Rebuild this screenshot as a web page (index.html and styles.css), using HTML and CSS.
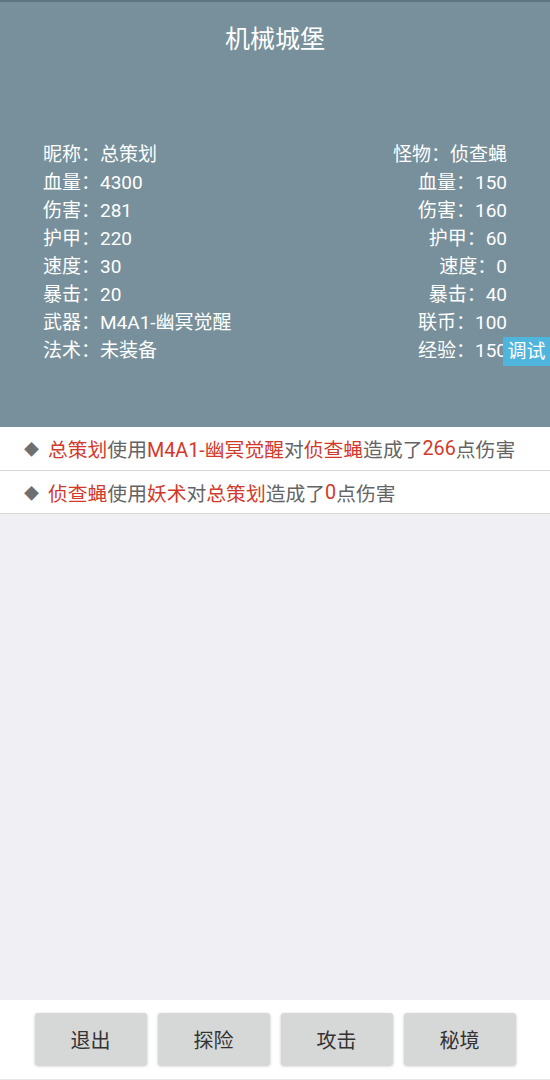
FILE: index.html
```html
<!DOCTYPE html>
<html lang="zh-CN">
<head>
    <meta charset="UTF-8">
    <meta name="viewport" content="width=device-width, initial-scale=1.0">
    <title>机械城堡</title>
    <link rel="stylesheet" href="styles.css">
</head>
<body>
    <div id="app">
        <div id="header">
            <div class="title">机械城堡</div>
            <div class="stats">
                <div class="stat-col">
                    <div>昵称：总策划</div>
                    <div>血量：4300</div>
                    <div>伤害：281</div>
                    <div>护甲：220</div>
                    <div>速度：30</div>
                    <div>暴击：20</div>
                    <div>武器：M4A1-幽冥觉醒</div>
                    <div>法术：未装备</div>
                </div>
                <div class="stat-col right">
                    <div>怪物：侦查蝇</div>
                    <div>血量：150</div>
                    <div>伤害：160</div>
                    <div>护甲：60</div>
                    <div>速度：0</div>
                    <div>暴击：40</div>
                    <div>联币：100</div>
                    <div>经验：150</div>
                </div>
            </div>
            <div class="debug-btn">调试</div>
        </div>

        <div id="log">
            <div class="log-row">
                <span class="dot">◆</span>
                <span class="hl">总策划</span>使用<span class="hl">M4A1-幽冥觉醒</span>对<span class="hl">侦查蝇</span>造成了<span class="hl">266</span>点伤害
            </div>
            <div class="log-row">
                <span class="dot">◆</span>
                <span class="hl">侦查蝇</span>使用<span class="hl">妖术</span>对<span class="hl">总策划</span>造成了<span class="hl">0</span>点伤害
            </div>
        </div>

        <div id="toolbar">
            <button>退出</button>
            <button>探险</button>
            <button>攻击</button>
            <button>秘境</button>
        </div>
    </div>
</body>
</html>
```

FILE: styles.css
```css
body {
    margin: 0;
    font-family: Roboto, "Noto Sans CJK SC", sans-serif;
    background-color: #efeff4;
}

#app {
    display: flex;
    flex-direction: column;
    height: 1080px;
}

#header {
    position: relative;
    height: 427px;
    box-sizing: border-box;
    background-color: #78909b;
    border-top: 2px solid #5e7481;
    color: #fff;
    padding: 0 43px;
}

.title {
    text-align: center;
    font-size: 25px;
    line-height: 30px;
    padding-top: 23px;
}

.stats {
    display: flex;
    justify-content: space-between;
    margin-top: 86px;
    font-size: 19px;
    line-height: 28px;
}

.stat-col.right {
    text-align: right;
}

.debug-btn {
    position: absolute;
    right: 0;
    top: 335px;
    width: 47px;
    height: 29px;
    line-height: 29px;
    text-align: center;
    background-color: #4fb5dc;
    color: #fff;
    font-size: 19px;
    white-space: nowrap;
    overflow: hidden;
}

#log {
    flex-grow: 1;
}

.log-row {
    display: flex;
    align-items: center;
    height: 42px;
    padding-left: 24px;
    background-color: #fff;
    border-bottom: 1px solid #d8d8d8;
    font-size: 19.8px;
    color: #646464;
    white-space: nowrap;
}

.log-row:first-child {
    height: 43px;
}

.dot {
    color: #6f6f6f;
    font-size: 15px;
    width: 24px;
}

.hl {
    color: #d3392b;
}

#toolbar {
    display: flex;
    justify-content: center;
    gap: 11px;
    height: 80px;
    box-sizing: border-box;
    padding-top: 13px;
    background-color: #fff;
    border-bottom: 1px solid #e6e6e6;
}

button {
    width: 112px;
    height: 52px;
    border: none;
    border-radius: 3px;
    background-color: #d6d7d7;
    color: #333;
    font-family: Roboto, "Noto Sans CJK SC", sans-serif;
    font-size: 20px;
    box-shadow: 0 1px 3px rgba(0,0,0,0.25);
}
```
